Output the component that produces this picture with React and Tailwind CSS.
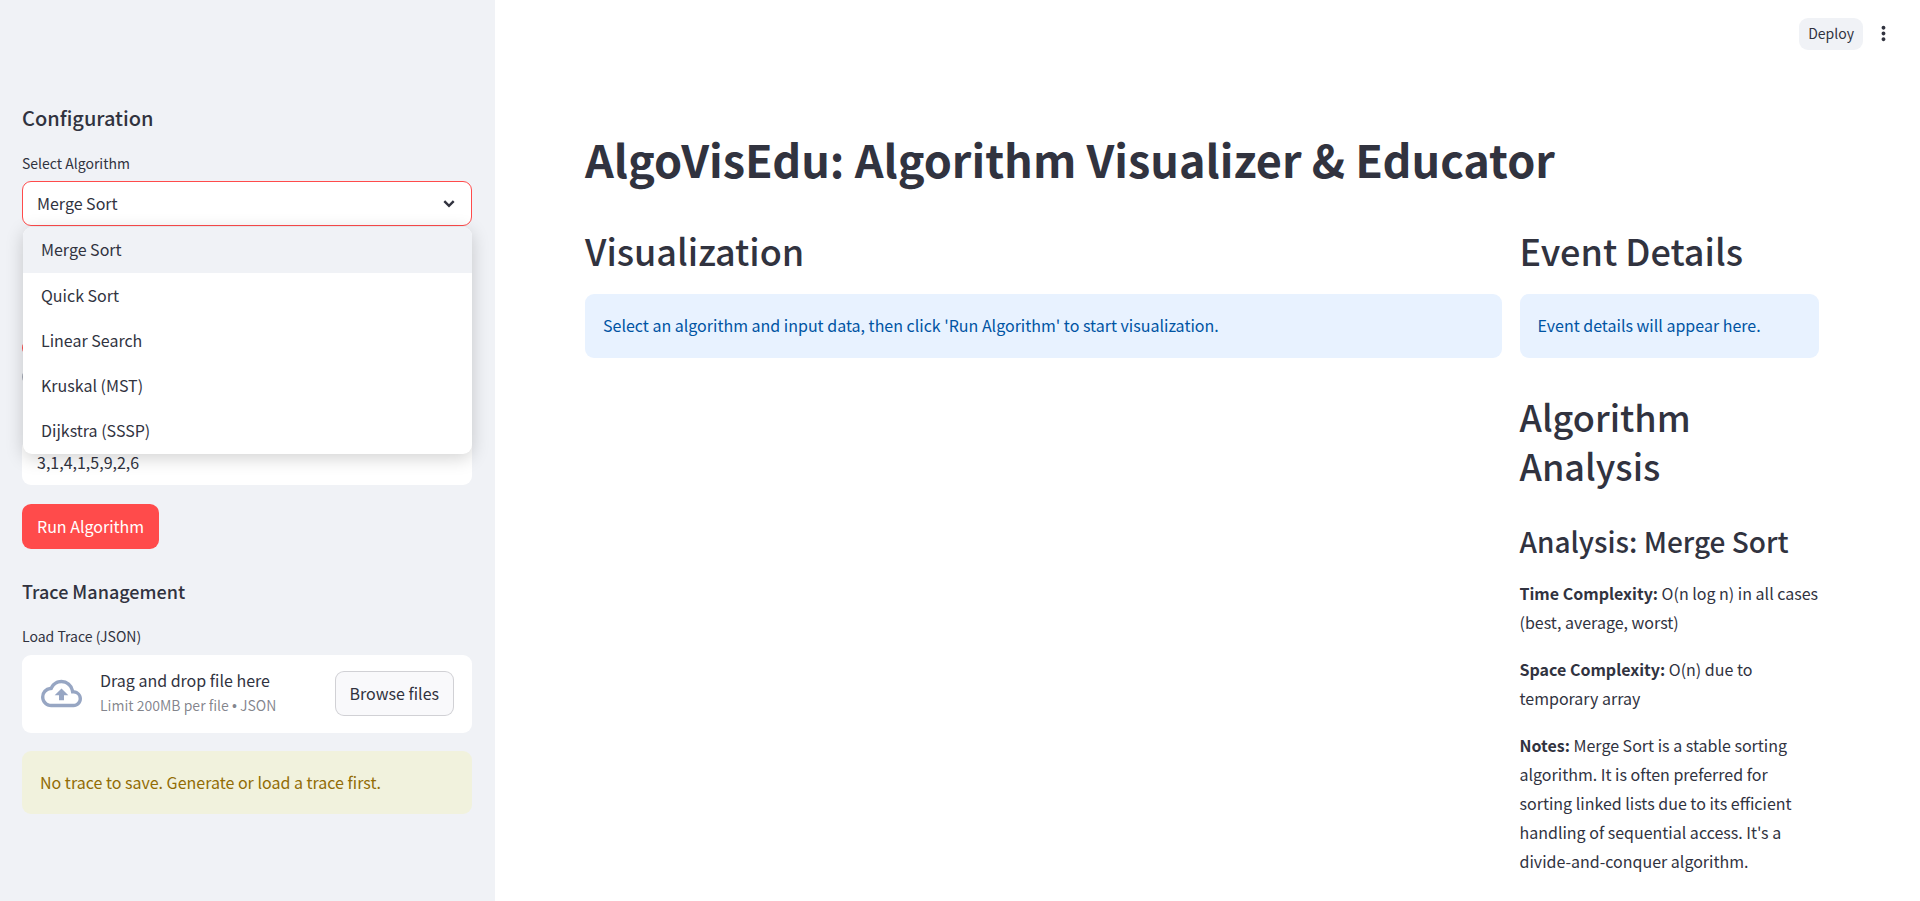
import { MdMoreVert, MdOutlineCloudUpload } from "react-icons/md";

const algorithms = ["Merge Sort", "Quick Sort", "Linear Search", "Kruskal (MST)", "Dijkstra (SSSP)"];

const notes = [
  ["Time Complexity:", "O(n log n) in all cases (best, average, worst)"],
  ["Space Complexity:", "O(n) due to temporary array"],
  [
    "Notes:",
    "Merge Sort is a stable sorting algorithm. It is often preferred for sorting linked lists due to its efficient handling of sequential access. It's a divide-and-conquer algorithm.",
  ],
];

function Info({ children }) {
  return (
    <div className="rounded-[9px] bg-[#e8f2ff] px-[18px] pt-[17px] pb-[19px] leading-7 text-[#0054a3]">{children}</div>
  );
}

function SectionTitle({ children }) {
  return <h2 className="text-4xl/[49px] font-medium">{children}</h2>;
}

function ChevronDown() {
  return (
    <svg
      viewBox="0 0 22 22"
      fill="none"
      stroke="currentColor"
      strokeWidth="2.4"
      className="pointer-events-none absolute top-3 right-3 size-[22px]"
    >
      <path d="M6.3 8.2 11 12.9l4.7-4.7" />
    </svg>
  );
}

function AlgorithmSelect() {
  return (
    <div>
      <label htmlFor="algorithm" className="block text-sm/[22px]">Select Algorithm</label>
      <div className="relative mt-[7px]">
        <select
          id="algorithm"
          defaultValue="Merge Sort"
          className="block h-[45px] w-full appearance-none rounded-[9px] border border-[#ff4b4b] bg-white px-3.5 pb-0.5 outline-none"
        >
          {algorithms.map((name) => (
            <option key={name}>{name}</option>
          ))}
        </select>
        <ChevronDown />
        <ul
          role="listbox"
          aria-label="Algorithms"
          className="absolute inset-x-0 top-full z-10 mt-px ml-px overflow-hidden rounded-[9px] bg-white pb-px shadow-[0_4px_18px_rgba(0,0,0,0.18)]"
        >
          {algorithms.map((name, i) => (
            <li
              key={name}
              role="option"
              aria-selected={i === 0}
              className="flex h-[45px] items-center px-[18px] pb-px aria-selected:h-[46px] aria-selected:bg-[#f0f2f6] aria-selected:pb-0.5"
            >
              {name}
            </li>
          ))}
        </ul>
      </div>
    </div>
  );
}

function Sidebar() {
  return (
    <aside className="w-[495px] shrink-0 bg-[#f0f2f6] pt-[104px] pr-[23px] pb-[88px] pl-[22px]">
      <h2 className="mb-[21px] text-xl/[27px] font-medium">Configuration</h2>
      <AlgorithmSelect />
      <div role="radiogroup" aria-label="Input method" className="mt-[107px] mb-12">
        <div className="flex h-[29px] items-center">
          <input type="radio" name="method" aria-label="Manual" defaultChecked className="size-[18px] appearance-none rounded-full border-[6px] border-[#ff4b4b] bg-white" />
        </div>
        <div className="flex h-[29px] items-center">
          <input type="radio" name="method" aria-label="Random" className="size-[18px] appearance-none rounded-full border-2 border-[#a3a8b4] bg-white" />
        </div>
      </div>
      <input aria-label="Array values" defaultValue="3,1,4,1,5,9,2,6" className="block h-[46px] w-full rounded-[9px] bg-white px-[15px] outline-none" />
      <button className="mt-[19px] block h-[45px] rounded-[9px] bg-[#ff4b4b] px-[15px] pb-0.5 text-white">Run Algorithm</button>
      <h3 className="mt-[30px] mb-[22px] text-lg/6 font-medium">Trace Management</h3>
      <label htmlFor="trace" className="block text-sm/[22px]">Load Trace (JSON)</label>
      <div className="mt-2 flex items-center rounded-[9px] bg-white pt-[15px] pb-4 pr-[18px] pl-[19px]">
        <MdOutlineCloudUpload className="mr-[18px] size-[41px] text-[#97a6c3]" />
        <div className="flex-1">
          <p className="mb-[5px] leading-5">Drag and drop file here</p>
          <p className="text-sm/[21px] text-[#31333f]/60">
            Limit 200MB per file <span className="font-['Liberation_Sans',sans-serif]">•</span> JSON
          </p>
        </div>
        <input id="trace" type="file" accept=".json" className="sr-only" />
        <button className="h-[45px] rounded-[9px] border border-[#31333f]/20 bg-[#f9f9fb] px-3.5 pb-0.5">Browse files</button>
      </div>
      <div className="mt-[18px] rounded-[9px] bg-[#f1f2dd] p-[18px] leading-[27px] text-[#926c05]">
        No trace to save. Generate or load a trace first.
      </div>
    </aside>
  );
}

export default function App() {
  return (
    <div className="flex min-h-screen bg-white font-['Noto_Sans_CJK_SC','Noto_Sans',sans-serif] text-base text-[#31333f]">
      <Sidebar />
      <div className="min-w-0 flex-1">
        <header className="flex h-[68px] items-center justify-end gap-2 pr-[25px]">
          <button className="h-8 rounded-[9px] bg-[#f0f2f6] px-[9px] pb-0.5 text-sm">Deploy</button>
          <button aria-label="Menu" className="flex h-8 w-6 items-center justify-center pb-0.5">
            <MdMoreVert className="size-[23px]" />
          </button>
        </header>
        <main className="pt-[61px] pr-[101px] pb-6 pl-[90px]">
          <h1 className="mb-[38px] text-[45px]/[59px] font-bold">AlgoVisEdu: Algorithm Visualizer &amp; Educator</h1>
          <div className="flex gap-[18px]">
            <section className="min-w-0 flex-[1_1_calc(75%-18px)]">
              <SectionTitle>Visualization</SectionTitle>
              <div className="mt-[19px]">
                <Info>Select an algorithm and input data, then click 'Run Algorithm' to start visualization.</Info>
              </div>
            </section>
            <section className="min-w-0 flex-[1_1_calc(25%-18px)]">
              <SectionTitle>Event Details</SectionTitle>
              <div className="mt-[19px] mb-[34px]">
                <Info>Event details will appear here.</Info>
              </div>
              <SectionTitle>Algorithm Analysis</SectionTitle>
              <h3 className="mt-8 mb-[19px] text-[28px]/[38px] font-medium">Analysis: Merge Sort</h3>
              <div className="flex flex-col gap-[18px] leading-[29px]">
                {notes.map(([term, text]) => (
                  <p key={term}>
                    <strong className="font-bold">{term}</strong> {text}
                  </p>
                ))}
              </div>
            </section>
          </div>
        </main>
      </div>
    </div>
  );
}
